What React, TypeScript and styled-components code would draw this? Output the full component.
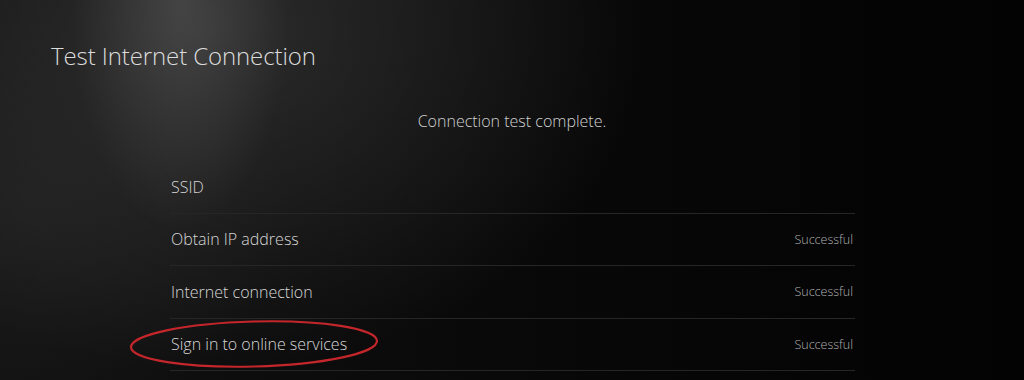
import * as React from 'react';
import styled, { createGlobalStyle } from 'styled-components';

const GlobalStyle = createGlobalStyle`
  html, body {
    margin: 0;
    padding: 0;
    background: #050505;
  }
  body {
    font-family: 'Open Sans', 'Noto Sans', sans-serif;
  }
`;

const Screen = styled.div`
  width: 1024px;
  height: 380px;
  overflow: hidden;
  position: relative;
  box-sizing: border-box;
  padding: 40px 0 0 51px;
  background:
    radial-gradient(ellipse 110px 230px at 180px 0px, rgba(100, 100, 100, 0.45), rgba(60, 60, 60, 0) 100%),
    radial-gradient(ellipse 440px 340px at 210px 30px, rgba(50, 50, 50, 0.85), rgba(20, 20, 20, 0) 100%),
    radial-gradient(ellipse 260px 220px at 30px 210px, rgba(34, 34, 34, 0.7), rgba(0, 0, 0, 0) 100%),
    linear-gradient(90deg, #111 0%, #070707 60%, #030303 100%);
`;

const Title = styled.h1`
  margin: 0;
  font-size: 24px;
  font-weight: 300;
  color: #dcdcdc;
  letter-spacing: -0.1px;
  line-height: 32px;
`;

const Status = styled.div`
  margin: 39px 0 0 -51px;
  text-align: center;
  font-size: 16px;
  font-weight: 300;
  color: #d0d0d0;
  line-height: 20px;
`;

const List = styled.div`
  margin: 30px 0 0 119px;
  width: 685px;
  display: flex;
  flex-direction: column;
`;

const Row = styled.div`
  position: relative;
  height: 52.5px;
  box-sizing: border-box;
  display: flex;
  align-items: center;
  justify-content: space-between;
  padding: 0 2px 0 1px;
  border-bottom: 1px solid #262626;
`;

const Label = styled.span`
  font-size: 16px;
  font-weight: 300;
  color: #d6d6d6;
`;

const Result = styled.span`
  font-size: 12.5px;
  font-weight: 300;
  color: #b0b0b0;
`;

const Circle = styled.svg`
  position: absolute;
  left: -42px;
  top: 0px;
  width: 254px;
  height: 52px;
  pointer-events: none;
  overflow: visible;
`;

const rows = [
  { label: 'SSID', result: '' },
  { label: 'Obtain IP address', result: 'Successful' },
  { label: 'Internet connection', result: 'Successful' },
  { label: 'Sign in to online services', result: 'Successful', marked: true },
];

export default function App() {
  return (
    <>
      <GlobalStyle />
      <Screen>
        <Title>Test Internet Connection</Title>
        <Status>Connection test complete.</Status>
        <List>
          {rows.map((r) => (
            <Row key={r.label}>
              <Label>{r.label}</Label>
              <Result>{r.result}</Result>
              {r.marked && (
                <Circle viewBox="0 0 254 52">
                  <ellipse
                    cx="126"
                    cy="25"
                    rx="123"
                    ry="22.5"
                    transform="rotate(-1.5 126 25)"
                    fill="none"
                    stroke="#c4262b"
                    strokeWidth="2.2"
                  />
                </Circle>
              )}
            </Row>
          ))}
        </List>
      </Screen>
    </>
  );
}
